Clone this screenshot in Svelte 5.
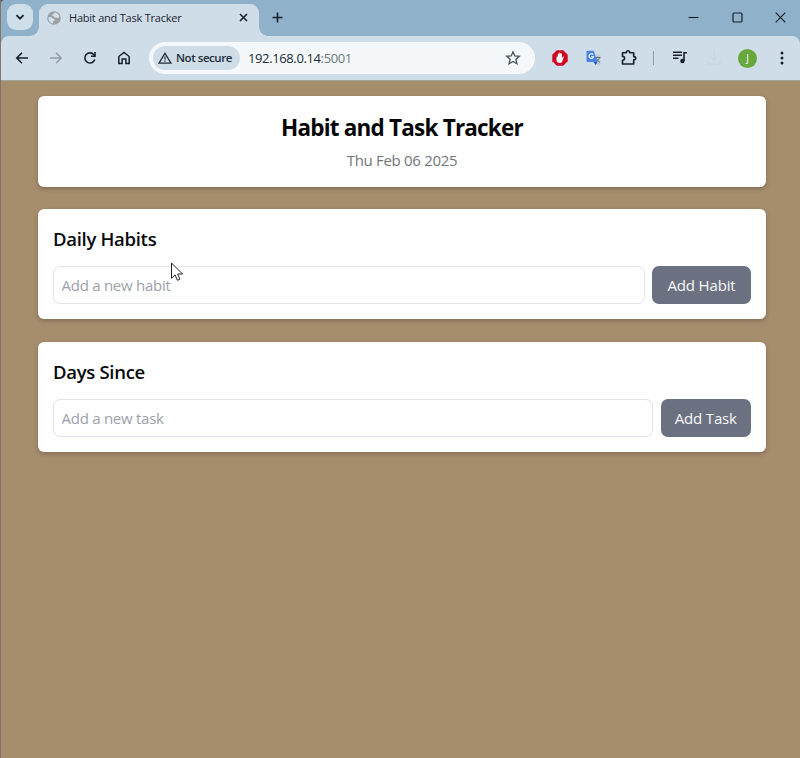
<script>
  let habit = $state('');
  let task = $state('');
</script>

<div class="window">
  <header class="tabs">
    <button class="search" aria-label="Search tabs">
      <svg width="10" height="10" viewBox="0 0 10 10"><path d="M1.5 3.2 5 6.7 8.5 3.2" fill="none" stroke="#17212b" stroke-width="1.8" /></svg>
    </button>
    <div class="tab">
      <svg class="globe" width="14" height="14" viewBox="0 0 14 14">
        <circle cx="7" cy="7" r="6.8" fill="#9aa2a8" />
        <path d="M7.2 1.5c2.3.1 4.6 1.8 5.2 4.3l-1.5 1.4-1.7-.8-1.8.1-.7-1.6-1.5-.2.2-1.2 1.7-.4zM1.5 6.2l2.8.1 1.7 1.5 1.5.5.1 1.3-1.6.8-.2 2C3.2 12 1.1 9.3 1.5 6.2z" fill="#d5e1e9" />
      </svg>
      <span class="tabname">Habit and Task Tracker</span>
      <svg class="close" width="9" height="9" viewBox="0 0 9 9"><path d="m1 1 7 7M8 1 1 8" stroke="#17212b" stroke-width="1.6" /></svg>
    </div>
    <svg class="plus" width="11" height="11" viewBox="0 0 11 11"><path d="M5.5.5v10M.5 5.5h10" stroke="#17212b" stroke-width="1.6" /></svg>
    <div class="controls">
      <svg width="11" height="11" viewBox="0 0 11 11"><path d="M.5 5.5h10" stroke="#14202b" stroke-width="1.1" /></svg>
      <svg width="11" height="11" viewBox="0 0 11 11"><rect x="1" y="1" width="9" height="9" rx="1.3" fill="none" stroke="#14202b" stroke-width="1.2" /></svg>
      <svg width="11" height="11" viewBox="0 0 11 11"><path d="m.7.7 9.6 9.6m0-9.6L.7 10.3" stroke="#14202b" stroke-width="1.2" /></svg>
    </div>
  </header>

  <nav class="toolbar">
    <div class="nav">
      <svg width="16" height="16" viewBox="0 0 16 16"><path d="M14 8H3M8 2.8 2.8 8 8 13.2" fill="none" stroke="#17212b" stroke-width="1.6" /></svg>
      <svg width="16" height="16" viewBox="0 0 16 16"><path d="M2 8h11M8 2.8 13.2 8 8 13.2" fill="none" stroke="#919ca5" stroke-width="1.5" /></svg>
      <svg width="16" height="16" viewBox="0 0 16 16"><path d="M12.8 9.6A5.1 5.1 0 1 1 12 4.8l1 1.1" fill="none" stroke="#17212b" stroke-width="1.6" /><path d="M13.8 2v5H8.900V5.500h3.400V2z" fill="#17212b" /></svg>
      <svg width="16" height="16" viewBox="0 0 16 16"><path d="M2.800 13.600V6.500L8 2.500l5.200 4v7.100H9.900V9H6.100v4.600z" fill="none" stroke="#17212b" stroke-width="1.5" /></svg>
    </div>
    <div class="address">
      <div class="chip">
        <svg width="14" height="12" viewBox="0 0 14 12"><path d="M7 1.3 13 11.2H1z" fill="none" stroke="#25313c" stroke-width="1.3" /><path d="M7 4.4v3.3M7 8.5v1.3" stroke="#25313c" stroke-width="1.2" /></svg>
        <span>Not secure</span>
      </div>
      <span class="url">192.168.0.14<i>:5001</i></span>
      <svg class="star" width="16" height="16" viewBox="0 0 16 16"><path d="m8 1.8 1.8 4.1 4.5.4-3.4 3 1 4.4L8 11.4l-3.9 2.3 1-4.4-3.4-3 4.5-.4z" fill="none" stroke="#46515a" stroke-width="1.3" /></svg>
    </div>
    <svg class="hand" width="16" height="16" viewBox="0 0 16 16">
      <path d="M4.8.3h6.4l4.5 4.5v6.4l-4.5 4.5H4.8L.3 11.2V4.8z" fill="#cf0622" />
      <path d="M4.500 7.100c0-.9 1.200-.9 1.300 0V4.200c0-1 1.300-1 1.300 0v-.9c0-1 1.400-1 1.400 0v.7c0-1 1.400-1 1.400 0v4.200l.8-1.300c.6-.7 1.400-.2 1 .5l-1.500 4.100c-.5 1-1.200 1.500-2.200 1.500-2 0-3.500-1.100-3.500-3z" fill="#fff" />
    </svg>
    <svg class="translate" width="16" height="16" viewBox="0 0 16 16">
      <path d="M6 4.500h7.500q1 0 1 1v8.300q0 1-1 1H9.800z" fill="#bccddd" />
      <path d="M1.500.8h6.200L11.500 12H1.500q-1 0-1-1V1.800q0-1 1-1z" fill="#4a83e8" />
      <path d="M7.500 12h4l-1.800 3z" fill="#2459c0" />
      <path d="M7.200 4.800A2.300 2.300 0 1 0 7.500 6.800H5.300" fill="none" stroke="#fff" stroke-width="1.1" />
      <path d="M9.500 7.500h5M12 6.500v1M13.500 7.500q-.5 2.500-3 4M10.500 8.500q1 2.500 3.500 4" fill="none" stroke="#657586" stroke-width="1" />
    </svg>
    <svg class="puzzle" width="18" height="18" viewBox="0 0 18 18"><path d="M2.500 3.700h3.800C6.300 1 9.700 1 9.700 3.700h4v3.900c2.700 0 2.700 3.300 0 3.300V15H2.500v-3.800c2.800 0 2.800-3.800 0-3.800z" fill="none" stroke="#17212b" stroke-width="1.6" stroke-linejoin="round" /></svg>
    <span class="divider"></span>
    <svg class="music" width="16" height="14" viewBox="0 0 16 14"><path d="M1 1.300h9M1 4.300h9M1 7.300h5.500M12 10V1.800h3" fill="none" stroke="#17212b" stroke-width="1.6" /><circle cx="10.400" cy="10" r="2.200" fill="#17212b" /></svg>
    <svg class="download" width="16" height="16" viewBox="0 0 16 16"><path d="M8 1v9M4.500 7 8 10.500 11.500 7M2 10v4h12v-4" fill="none" stroke="#bfd2e1" stroke-width="1.5" /></svg>
    <span class="avatar">J</span>
    <svg class="more" width="4" height="14" viewBox="0 0 4 14"><g fill="#17212b"><circle cx="2" cy="2" r="1.5" /><circle cx="2" cy="7" r="1.5" /><circle cx="2" cy="12" r="1.5" /></g></svg>
  </nav>

  <main>
    <section class="card hero">
      <h1>Habit and Task Tracker</h1>
      <p>Thu Feb 06 2025</p>
    </section>
    <section class="card">
      <h2>Daily Habits</h2>
      <div class="row">
        <input placeholder="Add a new habit" bind:value={habit} />
        <button class="add habit-btn">Add Habit</button>
      </div>
    </section>
    <section class="card">
      <h2>Days Since</h2>
      <div class="row">
        <input placeholder="Add a new task" bind:value={task} />
        <button class="add task-btn">Add Task</button>
      </div>
    </section>
  </main>
  <svg class="cursor" width="13" height="20" viewBox="0 0 13 20"><path d="M1.500 1v15.300l3.600-3.400 2.300 5.400 2.500-1.100L7.600 12h4.900z" fill="#fff" stroke="#20242a" stroke-width="1" /></svg>
</div>

<style>
  :global(body) { background: #a68d6d; overflow: hidden; }
  .window {
    position: relative;
    box-sizing: border-box;
    width: 800px;
    height: 758px;
    border-left: 1px solid #827568;
    background: linear-gradient(#8fb2ca 50px, #a68d6d 50px);
    font-family: "Open Sans", "Noto Sans", sans-serif;
    overflow: hidden;
  }
  .window::before {
    content: "";
    position: absolute;
    left: -1px;
    top: 0;
    width: 1px;
    height: 234px;
    background: #493d3b;
  }
  svg { display: block; flex: none; }
  button { border: 0; padding: 0; font-family: inherit; }
  .tabs {
    position: relative;
    z-index: 1;
    display: flex;
    height: 36px;
    background: radial-gradient(circle at 5px 5px, #8fb2ca 5px, #4b5058 6px) 0 0 / 5px 5px no-repeat, #8fb2ca;
  }
  .search {
    display: flex;
    align-items: center;
    justify-content: center;
    width: 26px;
    height: 26px;
    margin: 4px 6px 0 6px;
    border-radius: 9px;
    background: #cfdfe9;
  }
  .tab {
    position: relative;
    display: flex;
    align-items: center;
    box-sizing: border-box;
    width: 220px;
    height: 32px;
    margin-top: 4px;
    padding: 0 11px 5px 8px;
    border-radius: 9px 9px 0 0;
    background: #cfdde8;
  }
  .tab::before, .tab::after {
    content: "";
    position: absolute;
    bottom: 0;
    width: 9px;
    height: 9px;
  }
  .tab::before { left: -9px; background: radial-gradient(circle at 0 0, transparent 8.5px, #cfdde8 9px); }
  .tab::after { right: -9px; background: radial-gradient(circle at 100% 0, transparent 8.5px, #cfdde8 9px); }
  .tabname { margin-left: 8px; color: #1b2530; font-size: 11px; letter-spacing: -0.22px; white-space: nowrap; }
  .close { margin-left: auto; }
  .plus { margin: 12px 0 0 13px; }
  .controls { display: flex; gap: 32.5px; margin: 12px 14px 0 auto; }
  .toolbar {
    display: flex;
    align-items: center;
    box-sizing: border-box;
    height: 45px;
    border-bottom: 1px solid #9da493;
    border-radius: 8px 8px 0 0;
    background: #cfdde8;
  }
  .nav { display: flex; gap: 18px; margin-left: 13px; }
  .address {
    display: flex;
    align-items: center;
    box-sizing: border-box;
    width: 386px;
    height: 32px;
    margin-left: 17px;
    padding: 0 14px 0 4px;
    border-radius: 16px;
    background: #f4f8fb;
  }
  .chip {
    display: flex;
    align-items: center;
    gap: 4px;
    box-sizing: border-box;
    width: 87px;
    height: 24px;
    padding-left: 5px;
    border-radius: 12px;
    background: #cfdde8;
    color: #202d39;
    font-size: 11.5px;
    font-weight: 600;
    letter-spacing: -0.45px;
    white-space: nowrap;
  }
  .chip span { margin-top: -1px; }
  .url { margin-left: 8px; color: #202a34; font-size: 13px; letter-spacing: -0.38px; }
  .url i { color: #6d7780; font-style: normal; }
  .star { margin-left: auto; }
  .hand { margin-left: 17px; }
  .translate { margin-left: 18px; }
  .puzzle { margin-left: 18px; }
  .divider { width: 1px; height: 14px; margin-left: 15px; background: #8d9fae; }
  .music { margin-left: 18px; }
  .download { margin-left: 18px; opacity: 0.45; }
  .avatar {
    display: flex;
    align-items: center;
    justify-content: center;
    width: 19px;
    height: 19px;
    margin-left: 16px;
    border-radius: 50%;
    background: #66a83b;
    color: #fff;
    font-size: 10px;
  }
  .more { margin-left: 23px; }
  main { display: flex; flex-direction: column; gap: 22.7px; padding: 15px 34px 0 37px; }
  .card {
    box-sizing: border-box;
    height: 110px;
    padding: 15px;
    border-radius: 6px;
    background: #fefefe;
    box-shadow: 0 2px 4px rgba(55, 40, 35, 0.3);
  }
  .hero { height: 90.5px; padding-top: 16px; text-align: center; }
  h1, h2, p { margin: 0; white-space: nowrap; }
  h1 { color: #050607; font-size: 22.5px; font-weight: 700; line-height: 32px; letter-spacing: -0.8px; }
  p { margin-top: 3px; color: #72767d; font-size: 15px; line-height: 27px; letter-spacing: -0.3px; }
  h2 { color: #08090b; font-size: 18.5px; font-weight: 600; line-height: 29px; letter-spacing: -0.3px; }
  .row { display: flex; gap: 7.5px; margin-top: 13px; }
  input {
    box-sizing: border-box;
    flex: 1;
    min-width: 0;
    height: 38px;
    padding: 0 7.5px;
    border: 1px solid #e1e4ea;
    border-radius: 7px;
    outline: 0;
    background: #fefefe;
    font: 15px "Open Sans", "Noto Sans", sans-serif;
    letter-spacing: -0.26px;
  }
  input::placeholder { color: #9da2aa; opacity: 1; }
  .add { height: 38px; border-radius: 7px; background: #6b7180; color: #f7f8f9; font-size: 15px; letter-spacing: -0.15px; white-space: nowrap; }
  .habit-btn { width: 99px; }
  .task-btn { width: 90.5px; }
  .cursor { position: absolute; left: 169px; top: 262px; }
</style>
